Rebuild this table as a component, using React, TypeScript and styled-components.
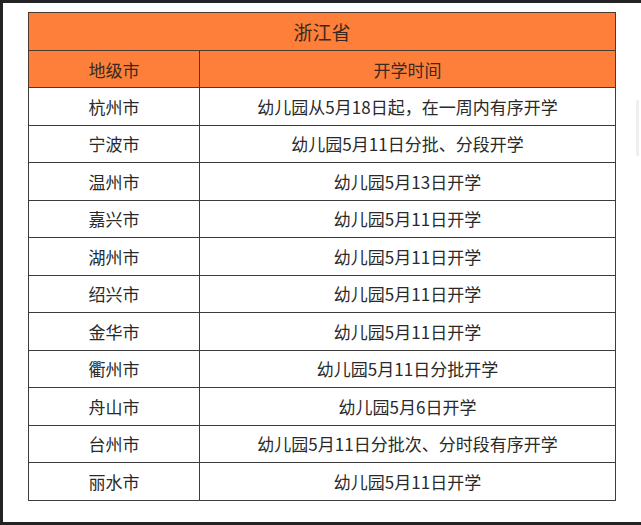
import React from "react";
import styled, { createGlobalStyle } from "styled-components";

const GlobalStyle = createGlobalStyle`
  html, body {
    margin: 0;
    padding: 0;
    background: #232323;
  }
  body {
    font-family: "Noto Sans CJK SC", "Noto Sans", sans-serif;
  }
`;

const Page = styled.div`
  position: relative;
  margin: 3px 0 3px 3px;
  height: 519px;
  background: #ffffff;
  padding: 9px 0 0 25px;
  box-sizing: border-box;
`;

const Table = styled.table`
  width: 588px;
  border-collapse: collapse;
  table-layout: fixed;
  font-size: 17px;
  color: #2a2a2a;
`;

const TitleCell = styled.th`
  height: 37px;
  background: #fe7f3a;
  color: #3a2a1e;
  font-weight: 400;
  font-size: 19px;
  border: 1px solid #4a3a30;
  padding: 0;
  text-align: center;
`;

const HeadCell = styled.th`
  height: 36px;
  background: #fe7f3a;
  color: #3a2a1e;
  font-weight: 400;
  border: 1px solid #4a3a30;
  padding: 0;
  text-align: center;
`;

const Cell = styled.td`
  height: 36.5px;
  border: 1px solid #3c3c3c;
  padding: 0;
  text-align: center;
  background: #ffffff;
`;

const ScrollThumb = styled.div`
  position: absolute;
  right: 2px;
  top: 97px;
  width: 3px;
  height: 56px;
  border-radius: 2px;
  background: #eeeeee;
`;

const rows: [string, string][] = [
  ["杭州市", "幼儿园从5月18日起，在一周内有序开学"],
  ["宁波市", "幼儿园5月11日分批、分段开学"],
  ["温州市", "幼儿园5月13日开学"],
  ["嘉兴市", "幼儿园5月11日开学"],
  ["湖州市", "幼儿园5月11日开学"],
  ["绍兴市", "幼儿园5月11日开学"],
  ["金华市", "幼儿园5月11日开学"],
  ["衢州市", "幼儿园5月11日分批开学"],
  ["舟山市", "幼儿园5月6日开学"],
  ["台州市", "幼儿园5月11日分批次、分时段有序开学"],
  ["丽水市", "幼儿园5月11日开学"],
];

const App = () => {
  return (
    <>
      <GlobalStyle />
      <Page>
        <Table>
          <colgroup>
            <col style={{ width: 171 }} />
            <col />
          </colgroup>
          <thead>
            <tr>
              <TitleCell colSpan={2}>浙江省</TitleCell>
            </tr>
            <tr>
              <HeadCell>地级市</HeadCell>
              <HeadCell>开学时间</HeadCell>
            </tr>
          </thead>
          <tbody>
            {rows.map(([city, time]) => (
              <tr key={city}>
                <Cell>{city}</Cell>
                <Cell>{time}</Cell>
              </tr>
            ))}
          </tbody>
        </Table>
        <ScrollThumb />
      </Page>
    </>
  );
};

export default App;
